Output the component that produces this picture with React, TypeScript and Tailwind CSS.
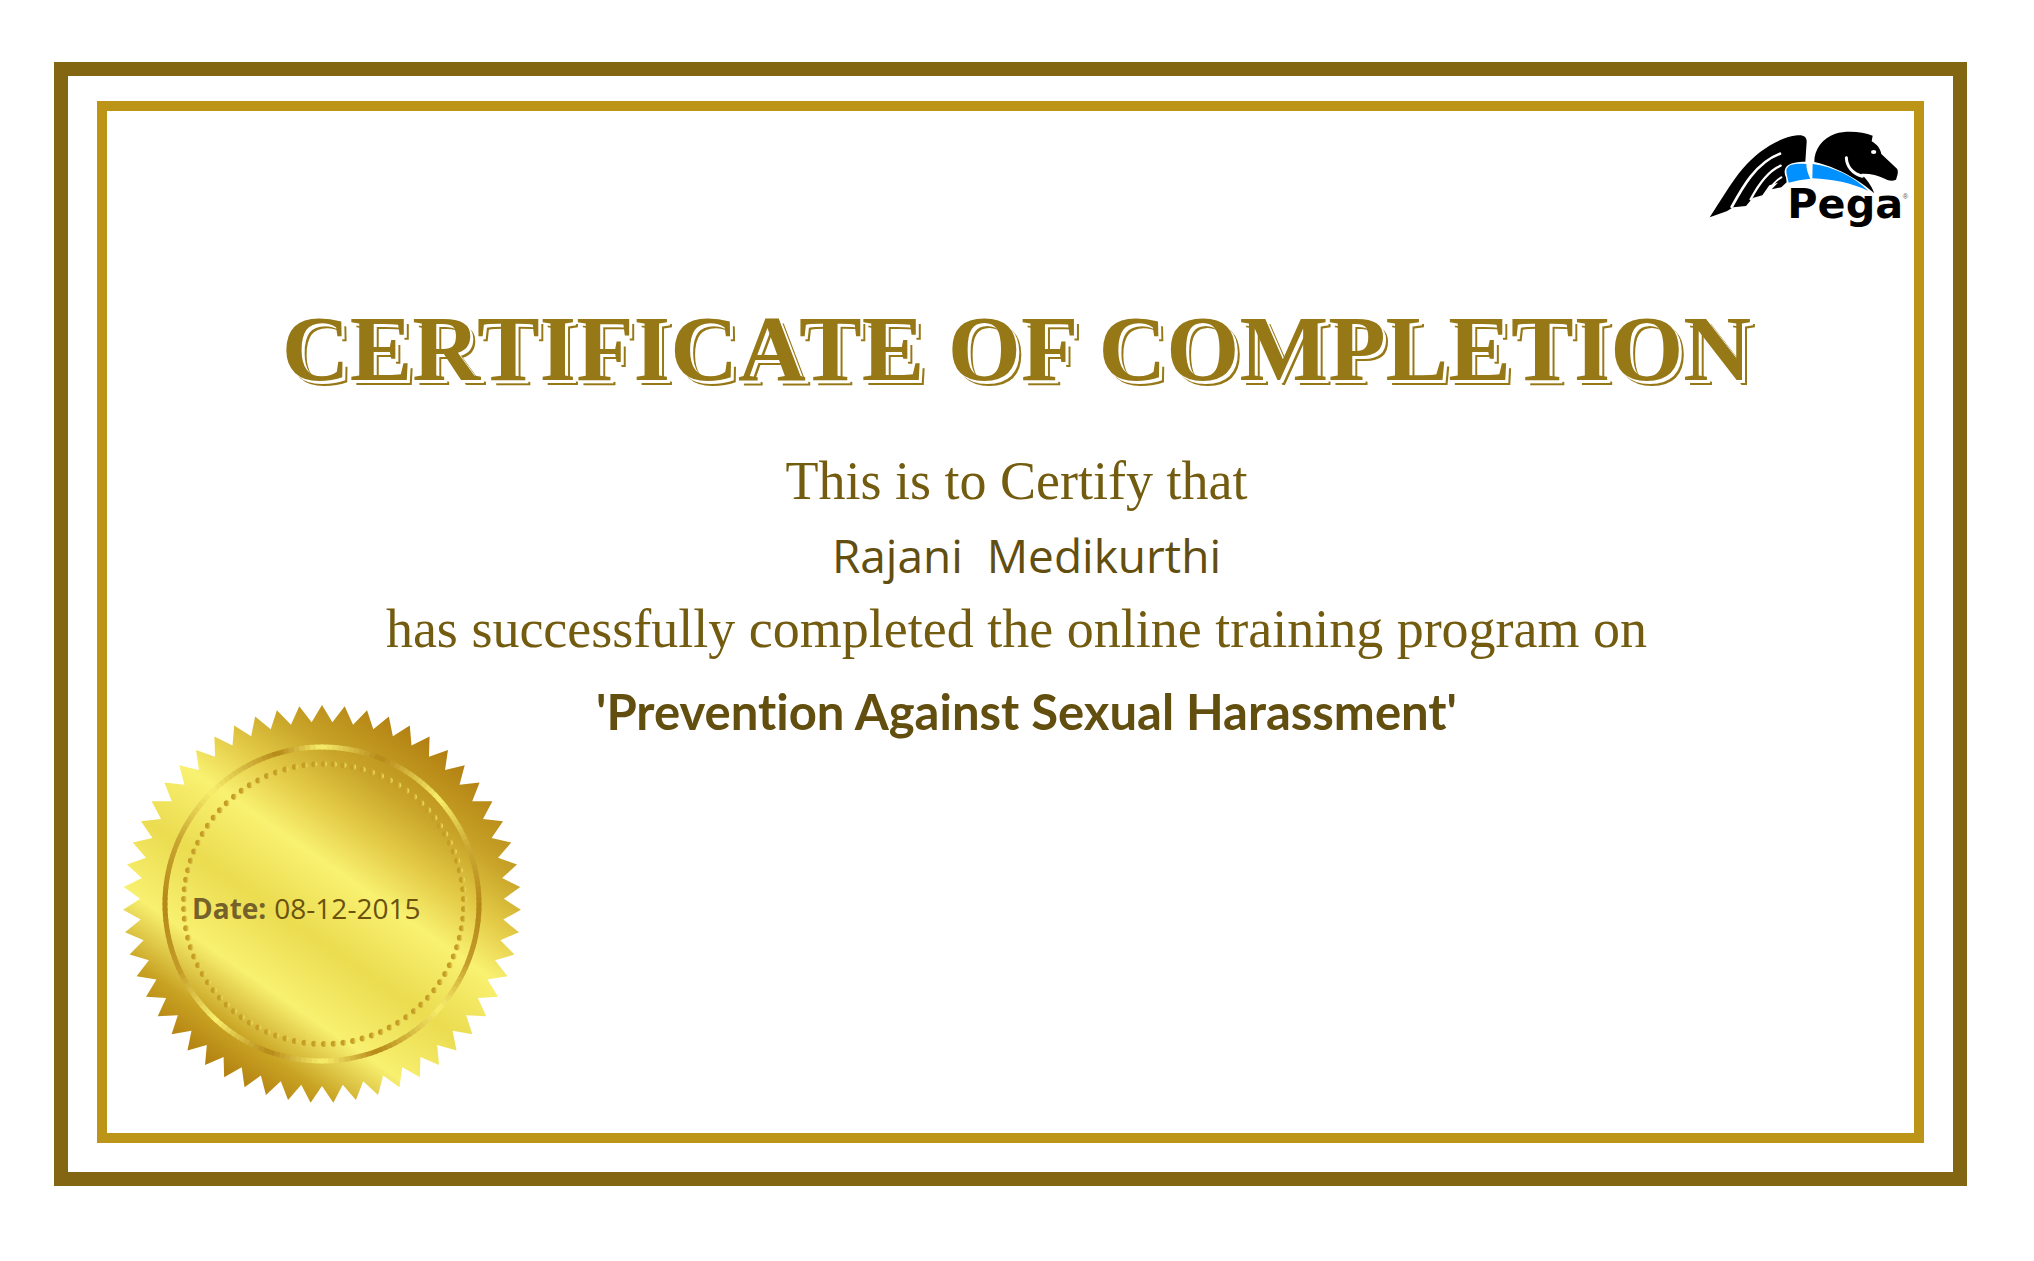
const TEETH = 55;
const DOTS = 90;

const point = (radius: number, degrees: number): [number, number] => {
  const a = (degrees * Math.PI) / 180;
  return [radius * Math.sin(a), -radius * Math.cos(a)];
};

const starPoints = Array.from({ length: TEETH * 2 }, (_, i) =>
  point(i % 2 === 0 ? 199 : 182, (i * 180) / TEETH)
    .map((n) => n.toFixed(2))
    .join(","),
).join(" ");

// Angle, and brightness from 0 (dark gold) to 1 (pale gold), clockwise from the top.
const RING_STOPS: [number, number][] = [
  [0, 1], [22, 0], [48, 1], [68, 0.35], [92, 0], [112, 0.2], [132, 1], [160, 0], [180, 1],
  [200, 0], [223, 1], [245, 0.2], [270, 0], [295, 0.3], [316, 1], [344, 0], [360, 1],
];

function ringColor(angle: number) {
  const i = RING_STOPS.findIndex(([a]) => a > angle);
  const [a0, v0] = RING_STOPS[i - 1];
  const [a1, v1] = RING_STOPS[i];
  const v = v0 + ((v1 - v0) * (angle - a0)) / (a1 - a0);
  const mix = (from: number, to: number) => Math.round(from + (to - from) * v);
  return `rgb(${mix(182, 248)},${mix(136, 238)},${mix(24, 108)})`;
}

function GoldSeal() {
  return (
    <svg viewBox="-200 -200 400 400" className="size-full" aria-hidden="true">
      <defs>
        <linearGradient id="gold" gradientUnits="userSpaceOnUse" x1="-114" y1="164" x2="114" y2="-164">
          <stop offset="0" stopColor="#b17e10" />
          <stop offset="0.11" stopColor="#c8a222" />
          <stop offset="0.25" stopColor="#f8f070" />
          <stop offset="0.42" stopColor="#ebdc50" />
          <stop offset="0.59" stopColor="#f9f171" />
          <stop offset="0.71" stopColor="#e3ca46" />
          <stop offset="0.83" stopColor="#c8a428" />
          <stop offset="1" stopColor="#b17e10" />
        </linearGradient>
        <linearGradient id="bead" x1="0" y1="0" x2="1" y2="0">
          <stop offset="0" stopColor="#c39a1e" />
          <stop offset="0.5" stopColor="#c6a026" />
          <stop offset="1" stopColor="#f3e668" />
        </linearGradient>
      </defs>
      <polygon points={starPoints} fill="url(#gold)" />
      {Array.from({ length: 180 }, (_, i) => {
        const [x0, y0] = point(157, i * 2 - 0.3);
        const [x1, y1] = point(157, i * 2 + 2.3);
        return (
          <path key={i} d={`M${x0} ${y0}A157 157 0 0 1 ${x1} ${y1}`} stroke={ringColor(i * 2 + 1)} strokeWidth="5" fill="none" />
        );
      })}
      {Array.from({ length: DOTS }, (_, i) => {
        const [x, y] = point(140, (i * 360) / DOTS);
        return <circle key={i} cx={x + 2} cy={y} r="3" fill="url(#bead)" />;
      })}
    </svg>
  );
}

function PegaLogo() {
  return (
    <svg viewBox="55 60 603 294" className="w-[201px] h-[98px]" role="img" aria-label="Pega">
      <path
        d="M57 322C92 270 120 218 158 174C200 126 258 84 320 76C340 74 349 82 348 96L344 155C322 155 300 158 289 168C280 178 280 190 286 202L288 217L272 232L243 238L262 218L236 226L215 256L186 264L166 288L128 292L108 304Z"
        fill="#000"
      />
      <path d="M123 291C155 232 196 158 268 131" stroke="#fff" strokeWidth="8" fill="none" strokeLinecap="round" />
      <path d="M180 268C202 226 230 184 270 167" stroke="#fff" strokeWidth="7" fill="none" strokeLinecap="round" />
      <path d="M236 242C246 222 258 210 272 202" stroke="#fff" strokeWidth="6" fill="none" strokeLinecap="round" />
      <path d="M300 165C315 160 334 161 347 162C347 178 352 192 359 206C336 208 314 212 294 218C292 206 286 192 287 180C289 173 294 168 300 165Z" fill="#0090ff" />
      <path
        d="M371 156C370 118 396 84 434 71C466 62 514 64 546 77L543 94C560 104 569 116 572 132L619 176C624 184 621 194 616 209C606 214 594 213 584 207C560 196 534 190 510 192C528 206 542 226 551 250C532 234 514 220 494 208C458 184 414 166 371 156Z"
        fill="#000"
      />
      <path d="M467 143C468 168 484 190 515 199" stroke="#fff" strokeWidth="9" fill="none" strokeLinecap="round" />
      <ellipse cx="549" cy="126" rx="8" ry="6" fill="#fff" />
      <path d="M366 162C428 170 490 200 533 243C484 219 424 207 365 205Z" fill="#0090ff" />
      <text x="290" y="323" fontFamily="DejaVu Sans" fontWeight="700" fontSize="124" fill="#000">
        Pega
      </text>
      <text x="636" y="268" fontFamily="Liberation Sans" fontSize="22" fill="#555">
        ®
      </text>
    </svg>
  );
}

export default function App() {
  return (
    <div className="flex min-h-screen bg-white pt-[62px] pr-[67px] pb-[75px] pl-[54px]">
      <div className="flex flex-1 border-[14px] border-[#826612] px-[29px] pt-[25px] pb-[29px]">
        <main className="grid flex-1 grid-cols-1 grid-rows-1 border-[10px] border-[#bc9418]">
          <div className="col-start-1 row-start-1 flex flex-col">
            <div className="flex justify-end pt-[19px] pr-1">
              <PegaLogo />
            </div>
            <div className="flex flex-col items-center pl-3 text-center font-['Liberation_Serif',serif] text-[54px] leading-[74px] text-[#735c10]">
              <h1 className="mt-[60px] text-[94px] leading-[120px] font-bold whitespace-nowrap text-[#967816] [text-shadow:3px_3px_0_#fff,5px_5px_0_#967816]">
                CERTIFICATE OF COMPLETION
              </h1>
              <p className="mt-9">This is to Certify that</p>
              <p className="pl-5 font-['Open_Sans',sans-serif] text-[46px] whitespace-pre text-[#624e0f]">Rajani  Medikurthi</p>
              <p>has successfully completed the online training program on</p>
              <p className="mt-2 pl-5 font-['Lato',sans-serif] text-[49px] font-bold text-[#624e0f] [font-variant-ligatures:none]">
                'Prevention Against Sexual Harassment'
              </p>
            </div>
          </div>
          <div className="col-start-1 row-start-1 mb-[29px] ml-[15px] grid size-[400px] self-end">
            <div className="col-start-1 row-start-1">
              <GoldSeal />
            </div>
            <p className="z-10 col-start-1 row-start-1 flex items-baseline gap-2 self-center pt-2 pl-[70px] font-['Open_Sans',sans-serif] text-[28px] text-[#6a520e]">
              <span className="font-bold text-[#75622a]">Date:</span>
              <time dateTime="2015-12-08">08-12-2015</time>
            </p>
          </div>
        </main>
      </div>
    </div>
  );
}
